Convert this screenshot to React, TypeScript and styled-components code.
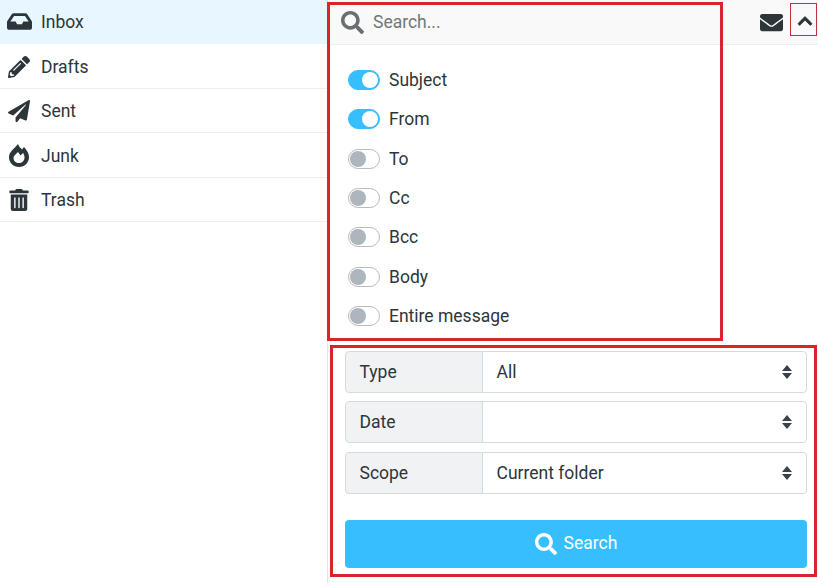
import React from 'react';
import styled, { createGlobalStyle } from 'styled-components';
import {
  FaChevronUp,
  FaEnvelope,
  FaInbox,
  FaPaperPlane,
  FaPencilAlt,
  FaSearch,
  FaTrashAlt,
} from 'react-icons/fa';

function FlameIcon() {
  return (
    <svg width="20" height="23" viewBox="0 0 20 23" fill="currentColor" fillRule="evenodd">
      <path d="M9 0c1 2.500 2.500 4 4 5.500L15 3c3 3 5 7 5 10 0 6-4.500 10-10 10S0 19 0 13C0 8 5 5 9 0zM10 19c3 0 5.500-2 5.500-5.500 0-2-.7-3.500-1.500-4.500l-2.500 2.500L9 8c-2.500 2.500-4.500 4-4.500 6 0 3 2.500 5 5.500 5z" />
    </svg>
  );
}

const folders = [
  { name: 'Inbox', icon: <FaInbox size={25} />, active: true },
  { name: 'Drafts', icon: <FaPencilAlt size={22} /> },
  { name: 'Sent', icon: <FaPaperPlane size={22} /> },
  { name: 'Junk', icon: <FlameIcon /> },
  { name: 'Trash', icon: <FaTrashAlt size={22} /> },
];

const scopes = [
  { name: 'Subject', on: true },
  { name: 'From', on: true },
  { name: 'To', on: false },
  { name: 'Cc', on: false },
  { name: 'Bcc', on: false },
  { name: 'Body', on: false },
  { name: 'Entire message', on: false },
];

const filters = [
  { label: 'Type', value: 'All' },
  { label: 'Date', value: '' },
  { label: 'Scope', value: 'Current folder' },
];

export default function App() {
  return (
    <Page>
      <GlobalStyle />
      <Sidebar>
        {folders.map((folder) => (
          <FolderRow key={folder.name} $active={folder.active}>
            <FolderIcon>{folder.icon}</FolderIcon>
            {folder.name}
          </FolderRow>
        ))}
      </Sidebar>
      <Content>
        <Header>
          <SearchBar>
            <FaSearch size={23} />
            <Placeholder>Search...</Placeholder>
          </SearchBar>
          <HeaderIcons>
            <FaEnvelope size={23} />
            <CollapseButton>
              <FaChevronUp size={16} stroke="currentColor" strokeWidth={30} />
            </CollapseButton>
          </HeaderIcons>
        </Header>
        <OptionList>
          {scopes.map((scope) => (
            <OptionRow key={scope.name}>
              <Toggle $on={scope.on} />
              {scope.name}
            </OptionRow>
          ))}
        </OptionList>
        <FilterForm>
          {filters.map((filter) => (
            <FilterRow key={filter.label}>
              <FilterLabel>{filter.label}</FilterLabel>
              <FilterSelect>
                {filter.value}
                <SelectCaret width="10" height="14" viewBox="0 0 10 14" fill="#3a4148">
                  <path d="M5 0l5 6H0zM5 14L0 8h10z" />
                </SelectCaret>
              </FilterSelect>
            </FilterRow>
          ))}
          <SearchButton>
            <FaSearch size={22} />
            <ButtonLabel>Search</ButtonLabel>
          </SearchButton>
        </FilterForm>
      </Content>
      <PanelCallout />
      <FormCallout />
    </Page>
  );
}

const GlobalStyle = createGlobalStyle`
  html, body {
    margin: 0;
    background: #fff;
  }
  body {
    font-family: Roboto, "Liberation Sans", sans-serif;
    font-size: 17.5px;
    color: #2c363a;
  }
`;

const Page = styled.div`
  position: relative;
  display: flex;
  width: 818px;
  height: 583px;
  overflow: hidden;
`;

const Sidebar = styled.nav`
  flex: 0 0 327px;
`;

const FolderRow = styled.div<{ $active?: boolean }>`
  display: flex;
  align-items: center;
  height: ${(p) => (p.$active ? '44px' : '44.6px')};
  padding-top: ${(p) => (p.$active ? '0' : '1.5px')};
  border-bottom: 1px solid ${(p) => (p.$active ? 'transparent' : '#eceff1')};
  box-sizing: border-box;
  background: ${(p) => (p.$active ? '#e8f7ff' : 'transparent')};
`;

const FolderIcon = styled.span`
  display: flex;
  justify-content: center;
  width: 38px;
  margin-right: 3px;
  color: #2c363a;
`;

const Content = styled.main`
  flex: 1;
  min-width: 0;
  border-left: 1px solid #e4e7e9;
`;

const Header = styled.header`
  display: flex;
  align-items: center;
  justify-content: space-between;
  height: 45px;
  box-sizing: border-box;
  border-bottom: 1px solid #eceff1;
  background: #f9f9f9;
`;

const SearchBar = styled.div`
  display: flex;
  align-items: center;
  gap: 9px;
  padding-left: 13px;
  color: #6a6f73;
`;

const Placeholder = styled.span`
  color: #72777b;
`;

const HeaderIcons = styled.div`
  display: flex;
  align-items: center;
  gap: 7px;
  margin-right: 1px;
`;

const CollapseButton = styled.span`
  display: flex;
  align-items: center;
  justify-content: center;
  width: 27px;
  height: 33px;
  box-sizing: border-box;
  margin-top: -5px;
  padding: 3px 0 0 3px;
  border: 1px solid #c0313a;
`;

const OptionList = styled.div`
  display: flex;
  flex-direction: column;
  padding: 15.3px 0 0 20px;
`;

const OptionRow = styled.label`
  display: flex;
  align-items: center;
  gap: 9px;
  height: 39.33px;
`;

const Toggle = styled.span<{ $on: boolean }>`
  position: relative;
  width: 32px;
  height: 20px;
  box-sizing: border-box;
  border-radius: 10px;
  border: 1px solid ${(p) => (p.$on ? '#37beff' : '#b5bcc2')};
  background: ${(p) => (p.$on ? '#37beff' : '#fff')};

  &::after {
    content: '';
    position: absolute;
    top: 1px;
    left: ${(p) => (p.$on ? '13px' : '1px')};
    width: 16px;
    height: 16px;
    border-radius: 50%;
    background: ${(p) => (p.$on ? '#fff' : '#adb5bd')};
  }
`;

const FilterForm = styled.form`
  display: flex;
  flex-direction: column;
  gap: 8.5px;
  margin: 15px 11px 0 17px;
`;

const FilterRow = styled.div`
  display: flex;
  height: 42px;
`;

const FilterLabel = styled.div`
  display: flex;
  align-items: center;
  flex: 0 0 138px;
  box-sizing: border-box;
  padding-left: 13.5px;
  border: 1px solid #d4dbde;
  border-radius: 4px 0 0 4px;
  background: #f1f2f4;
`;

const FilterSelect = styled.div`
  display: flex;
  align-items: center;
  flex: 1;
  box-sizing: border-box;
  margin-left: -1px;
  padding: 0 14px 0 13.5px;
  border: 1px solid #d4dbde;
  border-radius: 0 4px 4px 0;
  background: #fff;
`;

const SelectCaret = styled.svg`
  margin-left: auto;
`;

const SearchButton = styled.button`
  display: flex;
  align-items: center;
  justify-content: center;
  gap: 7px;
  height: 48px;
  margin-top: 18px;
  border: 0;
  border-radius: 4px;
  background: #37beff;
  color: #fff;
  font: inherit;
`;

const ButtonLabel = styled.span`
  margin-bottom: 2px;
`;

const Callout = styled.div`
  position: absolute;
  box-sizing: border-box;
  border: 3px solid #d9232e;
  pointer-events: none;
`;

const PanelCallout = styled(Callout)`
  left: 327px;
  top: 2px;
  width: 396px;
  height: 339px;
`;

const FormCallout = styled(Callout)`
  left: 330px;
  top: 345px;
  width: 487px;
  height: 232px;
`;
